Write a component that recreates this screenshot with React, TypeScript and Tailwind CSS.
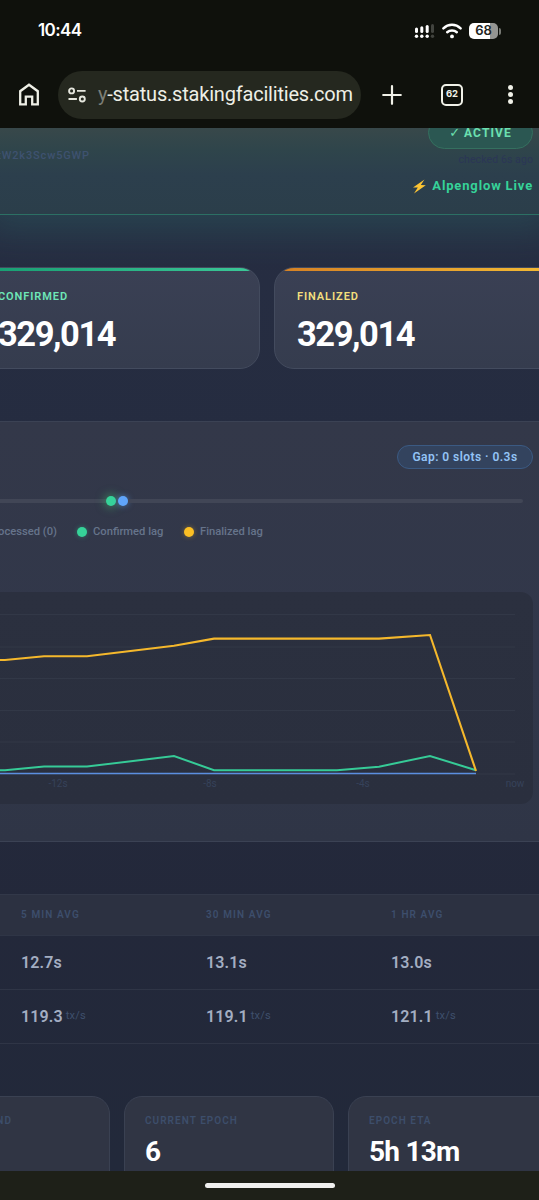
import type { ReactNode } from "react";

const averages = [
  { label: "5 MIN AVG", time: "12.7s", rate: "119.3" },
  { label: "30 MIN AVG", time: "13.1s", rate: "119.1" },
  { label: "1 HR AVG", time: "13.0s", rate: "121.1" },
];

const gridLines = [22.5, 55, 86.5, 118.5, 150, 182];

const StatusBar = () => (
  <div className="flex h-[62px] items-center justify-between pr-[38px] pl-[38px] font-[Inter,sans-serif]">
    <span className="text-[17px] font-semibold tracking-[-0.6px] text-white">10:44</span>
    <div className="flex items-center">
      <svg width="21" height="16" viewBox="0 0 21 16" fill="#fff">
        <rect x="1" y="4.4" width="3" height="5.6" rx="1.5" />
        <rect x="6.3" y="3.2" width="3" height="6.8" rx="1.5" />
        <rect x="11.7" y="2" width="3" height="8" rx="1.5" />
        <rect x="17" y="1" width="3" height="9" rx="1.5" fill="#42443f" />
        <circle cx="2.5" cy="13.3" r="1.7" />
        <circle cx="7.8" cy="13.3" r="1.7" />
        <circle cx="13.2" cy="13.3" r="1.7" />
        <circle cx="18.5" cy="13.3" r="1.7" fill="#42443f" />
      </svg>
      <svg width="20" height="16" viewBox="0 0 20 16" fill="none" stroke="#fff" strokeWidth="2.5" strokeLinecap="round" className="ml-[7px]">
        <path d="M1.4 5.3C6.2.7 13.8.7 18.6 5.3" />
        <path d="M5.2 9.2c2.7-2.4 6.9-2.4 9.6 0" />
        <circle cx="10" cy="13.4" r="1.9" fill="#fff" stroke="none" />
      </svg>
      <div className="ml-[7px] flex h-4 w-[29px] items-center justify-center rounded-[5px] bg-[linear-gradient(to_right,#fff_72%,#949592_72%)] text-[13px] font-semibold text-[#22241e]">
        68
      </div>
      <div className="ml-px h-[7px] w-[2px] rounded-r bg-[#777974]" />
    </div>
  </div>
);

const Toolbar = () => (
  <div className="flex h-[66px] items-center pb-px pl-[18px]">
    <svg width="22" height="24" viewBox="0 0 22 24" fill="none" stroke="#eeefe6" strokeWidth="2.3">
      <path d="M2.2 21.3V8.2L11 1.7l8.8 6.5v13.1h-5.6v-7.6H7.8v7.6z" />
    </svg>
    <div className="ml-[18px] flex h-12 w-[303px] items-center rounded-full bg-[#25281f] pl-[10px]">
      <svg width="18" height="16" viewBox="0 0 18 16" fill="none" stroke="#e6e7de" strokeWidth="1.9">
        <circle cx="3.6" cy="3.9" r="2.5" />
        <path d="M9 3.9h8.6M.5 12h8.4" />
        <circle cx="14.3" cy="12" r="2.5" />
      </svg>
      <span className="ml-[12px] pb-[2px] text-[20px] tracking-[-0.2px] whitespace-nowrap text-[#eeefe6]">
        <span className="text-[#7c7e76]">y</span>-status.stakingfacilities.com
      </span>
    </div>
    <svg width="20" height="20" viewBox="0 0 20 20" stroke="#f0f1e8" strokeWidth="2.2" strokeLinecap="round" className="ml-[21px]">
      <path d="M10 1.2v17.6M1.2 10h17.6" />
    </svg>
    <div className="ml-[39px] flex h-[22px] w-[22px] items-center justify-center rounded-[5px] border-2 border-[#f0f1e8] font-[Inter,sans-serif] text-[9.5px] font-bold text-[#f0f1e8]">
      62
    </div>
    <div className="ml-[45px] flex flex-col gap-[2.4px]">
      {[0, 1, 2].map((i) => (
        <div key={i} className="h-[5px] w-[5px] rounded-full bg-[#f0f1e8]" />
      ))}
    </div>
  </div>
);

const Header = () => (
  <header className="relative flex h-[87px] shrink-0 justify-between border-b border-[#2c7064] bg-[linear-gradient(to_bottom,#38484a,#2f454b_25%,#2c3f4d_55%,#2b3e4a)] shadow-[0_2px_34px_14px_rgba(45,130,120,0.26)]">
    <div className="flex w-[90px] justify-end overflow-hidden pt-[20px] text-[11px] leading-4 font-medium tracking-[0.85px] text-[#3e5270]">
      tW2k3Scw5GWP
    </div>
    <div className="flex flex-col items-end pr-[6px]">
      <div className="-mt-[12px] flex h-[33px] w-[105px] shrink-0 items-center justify-center rounded-full border border-[#35705f] bg-[#2b5752] text-[12px] font-bold tracking-[1.1px] text-[#6be0b0]">
        <span className="mr-1 font-['DejaVu_Sans'] text-[13px] font-bold tracking-normal">✓</span>
        ACTIVE
      </div>
      <span className="mt-[3px] text-[10.5px] leading-4 tracking-[0.1px] text-[#2b3656]">checked 6s ago</span>
      <div className="mt-[10px] flex items-center text-[13px] leading-4 font-bold tracking-[0.85px] text-[#36d399]">
        <svg width="15" height="15" viewBox="0 0 15 15" className="mr-[5px]">
          <path d="M12.5.5 1 8.4l4.8.2L2 14.5l11.8-8.2-5-.3z" fill="#fcc434" />
        </svg>
        Alpenglow Live
      </div>
    </div>
  </header>
);

type SlotCardProps = { label: string; className: string; bar: string; color: string };

const SlotCard = ({ label, className, bar, color }: SlotCardProps) => (
  <div className={`relative h-[102px] shrink-0 overflow-hidden rounded-[20px] border border-[#434b5e] bg-[linear-gradient(to_bottom,#3a4054,#353c4e)] ${className}`}>
    <div className={`absolute inset-x-0 -top-px h-1 ${bar}`} />
    <p className={`mt-[21px] text-[11px] leading-4 font-semibold tracking-[0.92px] ${color}`}>{label}</p>
    <p className="mt-[9px] text-[34.5px] leading-10 font-bold tracking-[-1.45px] text-white">329,014</p>
  </div>
);

const Dot = ({ className }: { className: string }) => (
  <div className={`h-[10px] w-[10px] shrink-0 rounded-full ${className}`} />
);

const Chart = () => (
  <div className="mr-[6px] h-[212px] rounded-r-[12px] bg-[linear-gradient(to_bottom,#2b303f,#2a2f3e)]">
    <svg width="533" height="212" viewBox="0 0 533 212" fill="none" className="font-[Roboto,sans-serif]">
      {gridLines.map((y) => (
        <path key={y} d={`M0 ${y}H515`} stroke="#323847" />
      ))}
      <path d="M0 181.5H476" stroke="#5b8ee0" strokeWidth="1.6" />
      <path d="M0 178.2H5L44 174.6H87L174 164L214 178.2H337L379 174.7L430 164L476 178.2" stroke="#36cb97" strokeWidth="2" />
      <path d="M0 68H5L44 64.3H87L174 53.8L214 46.6H379L430 43L476 179" stroke="#f5b82c" strokeWidth="2.1" />
      <g fill="#36425a" fontSize="10" textAnchor="middle">
        <text x="58" y="195">-12s</text>
        <text x="210" y="195">-8s</text>
        <text x="363" y="195">-4s</text>
        <text x="515" y="195">now</text>
      </g>
    </svg>
  </div>
);

const LagPanel = () => (
  <section className="mt-[52px] h-[421px] shrink-0 border-y border-[#3b4254] bg-[linear-gradient(to_bottom,#333849,#31374a_60%,#2f3546)]">
    <div className="flex justify-end pt-[23px] pr-[6px]">
      <div className="flex h-6 w-[136px] items-center justify-center rounded-full border border-[#3b5a83] bg-[#33435e] text-[12px] font-semibold tracking-[0.45px] whitespace-nowrap text-[#93c3f6]">
        Gap: 0 slots · 0.3s
      </div>
    </div>
    <div className="mt-[27px] flex h-[10px] items-center">
      <div className="h-1 w-[106px] bg-[#414656]" />
      <Dot className="bg-[#36d399] shadow-[0_0_9px_2px_rgba(67,180,110,0.5)]" />
      <Dot className="ml-[2px] bg-[#60a5fa] shadow-[0_0_6px_rgba(96,165,250,0.6)]" />
      <div className="h-1 w-[395px] rounded-r bg-[#414656]" />
    </div>
    <div className="mt-[13px] flex h-[26px] items-center text-[11.2px] font-medium whitespace-nowrap text-[#66748b]">
      <div className="flex w-[57px] shrink-0 justify-end">Processed (0)</div>
      <Dot className="ml-5 bg-[#36d399] shadow-[0_0_5px_rgba(52,211,153,0.4)]" />
      <span className="ml-[6px] w-[71px]">Confirmed lag</span>
      <Dot className="ml-5 bg-[#fbbf24] shadow-[0_0_5px_rgba(251,191,36,0.4)]" />
      <span className="ml-[6px]">Finalized lag</span>
    </div>
    <div className="mt-[47px]">
      <Chart />
    </div>
  </section>
);

const Row = ({ className, children }: { className: string; children: ReactNode }) => (
  <div className={`grid grid-cols-[185px_185px_148px] items-center border-b border-[#2f3546] pl-[21px] ${className}`}>
    {children}
  </div>
);

const Averages = () => (
  <section className="mt-[52px] shrink-0 border-t border-[#323849]">
    <Row className="h-[41px] bg-[#2c3141] pb-[2px]">
      {averages.map(({ label }) => (
        <span key={label} className="text-[10px] font-semibold tracking-[1.1px] text-[#3d4e6c]">{label}</span>
      ))}
    </Row>
    <Row className="h-[54px] text-base font-semibold tracking-[0.15px] text-[#a3aec2]">
      {averages.map(({ label, time }) => (
        <span key={label}>{time}</span>
      ))}
    </Row>
    <Row className="h-[54px] text-base font-semibold tracking-[0.15px] text-[#a3aec2]">
      {averages.map(({ label, rate }) => (
        <span key={label} className="flex items-center">
          {rate}
          <span className="ml-[3px] text-[11px] font-normal text-[#3f506d]">tx/s</span>
        </span>
      ))}
    </Row>
  </section>
);

const EpochCard = ({ label, value, className }: { label: string; value: string; className: string }) => (
  <div className={`h-[100px] shrink-0 overflow-hidden rounded-t-[18px] border border-[#3a4152] bg-[#303544] ${className}`}>
    <p className="mt-4 text-[10px] leading-4 font-semibold tracking-[1.05px] whitespace-nowrap text-[#3d4e6b]">{label}</p>
    <p className="mt-[5px] text-[28px] leading-9 font-bold tracking-[-0.75px] text-white">{value}</p>
  </div>
);

export default function App() {
  return (
    <div className="flex h-[1200px] w-[539px] flex-col overflow-hidden bg-[#0f110c] font-[Roboto,sans-serif]">
      <StatusBar />
      <Toolbar />
      <main className="flex h-[1043px] flex-col overflow-hidden bg-[linear-gradient(to_bottom,#272e43,#252c40_30%,#23283a_75%,#22293a)]">
        <Header />
        <div className="relative mt-[52px] flex shrink-0 gap-[14px] overflow-hidden">
          <SlotCard
            label="CONFIRMED"
            className="-ml-[25px] w-[285px] pl-[22px]"
            bar="bg-[linear-gradient(to_right,#169c70,#3cc898)]"
            color="text-[#6ee7b7]"
          />
          <SlotCard
            label="FINALIZED"
            className="w-[290px] pl-[22px]"
            bar="bg-[linear-gradient(to_right,#d58024,#f5bd35)]"
            color="text-[#f3df7d]"
          />
        </div>
        <LagPanel />
        <Averages />
        <div className="mt-[52px] flex shrink-0 gap-[14px] overflow-hidden">
          <EpochCard label="TIME BEHIND" value="" className="-ml-[100px] w-[210px] pl-[38px]" />
          <EpochCard label="CURRENT EPOCH" value="6" className="w-[210px] pl-5" />
          <EpochCard label="EPOCH ETA" value="5h 13m" className="w-[210px] pl-5" />
        </div>
      </main>
      <div className="flex h-[29px] shrink-0 justify-center bg-[#1e2018] pt-3">
        <div className="h-[5px] w-[130px] rounded-full bg-[#f0f0ef]" />
      </div>
    </div>
  );
}
